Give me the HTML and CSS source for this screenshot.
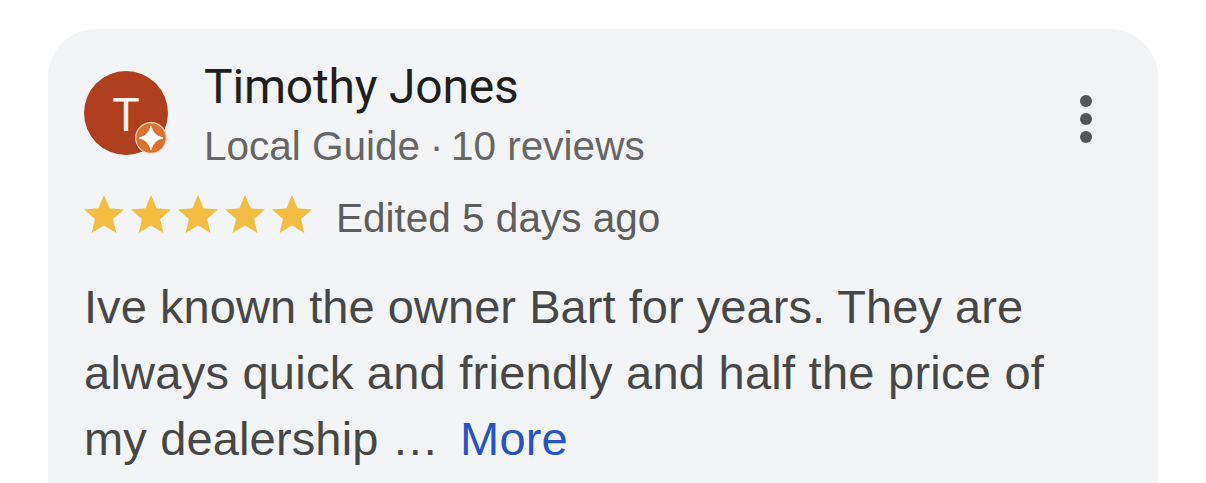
FILE: index.html
```html
<!DOCTYPE html>
<html lang="en">
<head>
    <meta charset="UTF-8">
    <meta name="viewport" content="width=device-width, initial-scale=1.0">
    <title>Review</title>
    <link rel="stylesheet" href="styles.css">
</head>
<body>
    <div class="review-card">
        <div class="header">
            <div class="avatar">
                <span class="initial">T</span>
                <svg class="badge" viewBox="0 0 34 34" width="34" height="34">
                    <circle cx="17" cy="17" r="15.300" fill="#dc7231" stroke="#f6d9c8" stroke-width="1.2"/>
                    <path d="M17 5Q19.200 14.800 29 17Q19.200 19.200 17 29Q14.800 19.200 5 17Q14.800 14.800 17 5z" fill="#fff" stroke="#fff" stroke-width="0.8" stroke-linejoin="round"/>
                </svg>
            </div>
            <div class="author">
                <div class="name">Timothy Jones</div>
                <div class="info">Local Guide<span class="dot"> · </span>10 reviews</div>
            </div>
            <svg class="menu" viewBox="0 0 14 50" width="14" height="50">
                <circle cx="7" cy="7" r="6"/>
                <circle cx="7" cy="25" r="6"/>
                <circle cx="7" cy="43" r="6"/>
            </svg>
        </div>
        <div class="rating">
            <svg class="stars" viewBox="0 0 230 40" width="230" height="40">
                <defs>
                    <path id="star" d="M20 31.500l12.360 7.500-3.280-14.060L40 15.480l-14.380-1.220L20 1l-5.620 13.260L0 15.480l10.920 9.460L7.640 39z"/>
                </defs>
                <use href="#star"/>
                <use href="#star" x="47"/>
                <use href="#star" x="94"/>
                <use href="#star" x="141"/>
                <use href="#star" x="188"/>
            </svg>
            <span class="date">Edited 5 days ago</span>
        </div>
        <div class="text">
            <div class="line-1">Ive known the owner Bart for years. They are</div>
            <div class="line-2">always quick and friendly and half the price of</div>
            <div class="line-3">my dealership … <a href="#" class="more">More</a></div>
        </div>
    </div>
</body>
</html>
```

FILE: styles.css
```css
body {
    margin: 0;
    background: #fff;
    font-family: "Liberation Sans", Arial, sans-serif;
    overflow: hidden;
}
.review-card {
    box-sizing: border-box;
    width: 1110px;
    height: 454px;
    margin: 29px 0 0 48px;
    padding: 31px 36px 0;
    background: #f3f4f6;
    border-radius: 48px 48px 0 0;
    white-space: nowrap;
}
.header {
    display: flex;
    height: 110px;
}
.avatar {
    position: relative;
    width: 84px;
    height: 84px;
    margin-top: 11px;
    border-radius: 50%;
    background: #b03f20;
    text-align: center;
}
.initial {
    font-family: Roboto, sans-serif;
    font-size: 46px;
    line-height: 88px;
    color: #fdf1ec;
}
.badge {
    position: absolute;
    left: 50px;
    top: 50px;
}
.author {
    margin-left: 36px;
}
.name {
    font-family: Roboto, sans-serif;
    font-size: 48px;
    line-height: 54px;
    letter-spacing: -0.2px;
    color: #1f1f1f;
}
.info {
    margin-top: 9px;
    font-size: 40.5px;
    line-height: 46px;
    color: #666;
}
.dot {
    letter-spacing: -1.7px;
}
.menu {
    margin: 34px 29px 0 auto;
    fill: #555;
}
.rating {
    display: flex;
    margin-top: 24px;
    height: 48px;
}
.stars {
    fill: #f2bd42;
}
.date {
    margin-left: 22px;
    font-size: 40.5px;
    line-height: 48px;
    color: #5e5e5e;
}
.text {
    margin-top: 32px;
    font-size: 47px;
    line-height: 66px;
    color: #474747;
}
.line-1 {
    letter-spacing: 0.05px;
}
.line-2 {
    letter-spacing: 0.25px;
}
.line-3 {
    letter-spacing: 0.15px;
}
.more {
    margin-left: 8px;
    color: #2853c5;
    text-decoration: none;
}
```
